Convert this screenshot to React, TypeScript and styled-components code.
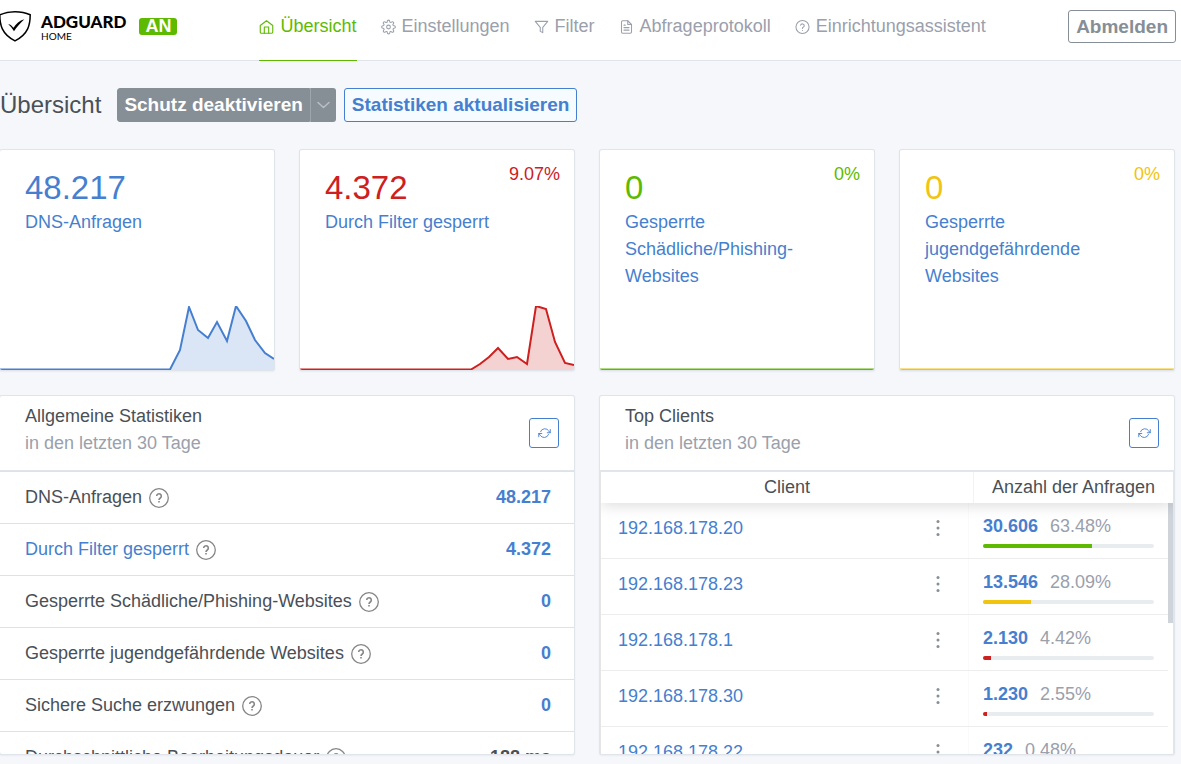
import React from "react";
import styled, { createGlobalStyle } from "styled-components";

const colors = {
  blue: "#467fcf",
  red: "#cd201f",
  green: "#5eba00",
  yellow: "#f1c40f",
  text: "#495057",
  muted: "#9aa0ac",
  gray: "#868e96",
  border: "#e0e5ec",
};

const GlobalStyle = createGlobalStyle`
  *, *::before, *::after { box-sizing: border-box; }
  body {
    margin: 0;
    background: #f5f7fb;
    color: ${colors.text};
    font-family: "Liberation Sans", Arial, sans-serif;
    font-size: 18px;
    line-height: 27px;
  }
  a { color: ${colors.blue}; text-decoration: none; }
  button { font-family: inherit; cursor: pointer; }
`;

const Header = styled.header`
  display: flex;
  align-items: flex-start;
  height: 61px;
  padding-right: 5px;
  background: #fff;
  border-bottom: 1px solid rgba(0, 40, 100, 0.12);
`;

const Brand = styled.a`
  display: flex;
  align-items: center;
  height: 52px;
  color: #000;
`;

const BrandText = styled.span`
  display: flex;
  flex-direction: column;
  margin: 4px 0 0 10px;
  font-family: Lato, sans-serif;
`;

const BrandName = styled.span`
  font-size: 17px;
  font-weight: 900;
  line-height: 16px;
`;

const BrandSub = styled.span`
  font-size: 10px;
  line-height: 12px;
`;

const Badge = styled.span`
  margin: 18px 0 0 13px;
  padding: 0 6px;
  border-radius: 3px;
  background: ${colors.green};
  color: #fff;
  font-weight: 700;
  line-height: 17px;
`;

const Nav = styled.nav`
  display: flex;
  gap: 24px;
  margin-left: 82px;
`;

const NavLink = styled.a<{ $active?: boolean }>`
  display: flex;
  gap: 6px;
  height: 61px;
  padding-top: 13px;
  border-bottom: 1px solid ${(p) => (p.$active ? colors.green : "transparent")};
  color: ${(p) => (p.$active ? colors.green : colors.muted)};
  white-space: nowrap;

  svg { margin-top: 6px; }
`;

const Button = styled.button<{ $tone: "outlineGray" | "outlineBlue" | "solid" }>`
  height: 34px;
  padding: 0 7px;
  border: 1px solid
    ${(p) => (p.$tone === "outlineBlue" ? colors.blue : colors.gray)};
  border-radius: 3px;
  background: ${(p) =>
    p.$tone === "solid" ? colors.gray : p.$tone === "outlineBlue" ? "#f5fbff" : "#fff"};
  color: ${(p) =>
    p.$tone === "solid" ? "#fff" : p.$tone === "outlineBlue" ? colors.blue : colors.gray};
  font-size: 19px;
  font-weight: 700;
  line-height: 30px;
  white-space: nowrap;
`;

const LogoutButton = styled(Button)`
  margin: 10px 0 0 auto;
  height: 33px;
`;

const SplitButton = styled.div`
  display: flex;
  margin: 0 8px 0 16px;
`;

const SplitMain = styled(Button)`
  padding: 0 6px;
  border-radius: 3px 0 0 3px;
`;

const SplitToggle = styled(Button)`
  display: flex;
  align-items: center;
  padding: 0 5px;
  border-width: 0 0 0 1px;
  border-color: #a0a6ad;
  border-radius: 0 3px 3px 0;
  color: #b9bec4;
`;

const Main = styled.main`
  margin-left: -1px;
  padding-right: 6px;
`;

const TitleRow = styled.div`
  display: flex;
  align-items: center;
  padding: 27px 0 27px 1px;
`;

const Title = styled.h1`
  margin: 0;
  font-size: 24px;
  font-weight: 400;
  line-height: 34px;
`;

const StatGrid = styled.section`
  display: grid;
  grid-template-columns: repeat(4, minmax(0, 1fr));
  gap: 24px;
`;

const PanelGrid = styled.section`
  display: grid;
  grid-template-columns: repeat(2, minmax(0, 1fr));
  gap: 24px;
  margin: 24px 0 9px;
`;

const Card = styled.article`
  display: flex;
  flex-direction: column;
  overflow: hidden;
  background: #fff;
  border: 1px solid rgba(0, 40, 100, 0.12);
  border-radius: 3px;
  box-shadow: 0 1px 2px rgba(0, 0, 0, 0.05);
`;

const StatCard = styled(Card)`
  min-height: 222px;
`;

const StatTop = styled.div`
  display: flex;
  justify-content: space-between;
  margin-bottom: 1px;
  padding: 11px 14px 0 25px;
`;

const StatValue = styled.div<{ $color: string }>`
  padding-top: 7px;
  color: ${(p) => p.$color};
  font-size: 33px;
  line-height: 40px;
`;

const StatPercent = styled.div<{ $color: string }>`
  color: ${(p) => p.$color};
`;

const StatLink = styled.a`
  width: 216px;
  padding-left: 25px;
`;

const Chart = styled.svg`
  display: block;
  width: 100%;
  height: 64px;
  margin-top: auto;
`;

const Panel = styled(Card)`
  height: 360px;
`;

const PanelHeader = styled.header`
  display: flex;
  flex: none;
  align-items: center;
  justify-content: space-between;
  height: 75px;
  padding: 0 15px 0 25px;
  border-bottom: 1px solid ${colors.border};
`;

const PanelTitle = styled.h2`
  margin: 0;
  font-size: 18px;
  font-weight: 400;
  line-height: 27px;
`;

const PanelSubtitle = styled.div`
  margin-bottom: 7px;
  color: ${colors.muted};
`;

const IconButton = styled.button`
  display: grid;
  place-items: center;
  width: 30px;
  height: 30px;
  padding: 0;
  border: 1px solid ${colors.blue};
  border-radius: 3px;
  background: #fff;
  color: ${colors.blue};
`;

const StatsTable = styled.table`
  width: 100%;
  border-collapse: separate;
  border-spacing: 0;
`;

const StatsCell = styled.td`
  height: 52px;
  padding: 0 23px 0 25px;
  border-top: 1px solid #dee2e6;

  &:last-child {
    text-align: right;
    font-weight: 700;
  }
`;

const StatsLabel = styled.div`
  display: flex;
  align-items: center;
  gap: 7px;
`;

const ClientsArea = styled.div`
  position: relative;
  flex: 1;
  min-height: 0;
  overflow: hidden;
  border: 1px solid rgba(0, 0, 0, 0.1);
  border-bottom: 0;
`;

const ClientsTable = styled.table`
  display: flex;
  flex-direction: column;
  height: 100%;
`;

const ClientsHead = styled.thead`
  display: block;
  z-index: 1;
  background: #fff;
  box-shadow: 0 2px 15px rgba(0, 0, 0, 0.15);
`;

const ClientsBody = styled.tbody`
  display: block;
  flex: 1;
  min-height: 0;
  padding-right: 5px;
  overflow-y: auto;
  scrollbar-width: none;
`;

const HeadRow = styled.tr`
  display: grid;
  grid-template-columns: minmax(0, 1fr) 200px;
  height: 31px;
`;

const HeadCell = styled.th`
  padding: 2px 0;
  font-weight: 400;
  text-align: center;

  & + & { border-left: 1px solid rgba(0, 0, 0, 0.05); }
`;

const BodyRow = styled.tr`
  display: grid;
  grid-template-columns: minmax(0, 1fr) 199px;
  height: 56px;
  border-bottom: 1px solid #ededed;
`;

const ClientCell = styled.td`
  display: flex;
  align-items: center;
  justify-content: space-between;
  padding: 0 18px 5px 17px;
  border-right: 1px solid rgba(0, 0, 0, 0.02);
`;

const MenuButton = styled.button`
  display: grid;
  place-items: center;
  width: 24px;
  height: 24px;
  padding: 0;
  border: 0;
  background: none;
  color: ${colors.gray};
`;

const CountCell = styled.td`
  padding: 10px 14px 0;
`;

const CountLine = styled.div`
  display: flex;
  gap: 12px;
  color: ${colors.muted};

  a { font-weight: 700; }
`;

const Track = styled.div`
  height: 4px;
  margin-top: 4px;
  overflow: hidden;
  border-radius: 2px;
  background: #e9ecef;
`;

const Fill = styled.div<{ $color: string }>`
  height: 100%;
  background: ${(p) => p.$color};
`;

const ScrollThumb = styled.div`
  position: absolute;
  top: 31px;
  right: 0;
  width: 5px;
  height: 120px;
  background: #ced4da;
`;

const lineIcon = {
  fill: "none",
  stroke: "currentColor",
  strokeLinecap: "round" as const,
  strokeLinejoin: "round" as const,
  "aria-hidden": true,
};

const HomeIcon = () => (
  <svg width="15" height="16" viewBox="0 0 24 24" {...lineIcon} strokeWidth="1.8">
    <path d="M2 9.500 12 2l10 7.500V20a2 2 0 0 1-2 2H4a2 2 0 0 1-2-2z" />
    <path d="M8.500 22V12h7v10" />
  </svg>
);

const GearIcon = () => (
  <svg width="15" height="16" viewBox="0 0 24 24" {...lineIcon} strokeWidth="1.7">
    <circle cx="12" cy="12" r="3" />
    <path d="M19.400 15a1.650 1.650 0 0 0 .33 1.820l.06.06a2 2 0 1 1-2.830 2.830l-.06-.06a1.650 1.650 0 0 0-2.800 1.170V21a2 2 0 0 1-4 0v-.09a1.650 1.650 0 0 0-2.900-1.170l-.06.06a2 2 0 1 1-2.830-2.830l.06-.06A1.650 1.650 0 0 0 3.090 14H3a2 2 0 0 1 0-4h.09a1.650 1.650 0 0 0 1.170-2.900l-.06-.06a2 2 0 1 1 2.830-2.830l.06.06A1.650 1.650 0 0 0 10 3.090V3a2 2 0 0 1 4 0v.09a1.650 1.650 0 0 0 2.800 1.170l.06-.06a2 2 0 1 1 2.830 2.830l-.06.06A1.650 1.650 0 0 0 20.910 10H21a2 2 0 0 1 0 4h-.09a1.650 1.650 0 0 0-1.510 1z" />
  </svg>
);

const FilterIcon = () => (
  <svg width="15" height="16" viewBox="0 0 24 24" {...lineIcon} strokeWidth="1.700">
    <path d="M22 3H2l8 9.460V19l4 2v-8.540z" />
  </svg>
);

const FileIcon = () => (
  <svg width="15" height="16" viewBox="0 0 24 24" {...lineIcon} strokeWidth="1.700">
    <path d="M14 2H6a2 2 0 0 0-2 2v16a2 2 0 0 0 2 2h12a2 2 0 0 0 2-2V8z" />
    <path d="M14 2v6h6M16 13H8M16 17H8M10 9H8" />
  </svg>
);

const HelpIcon = () => (
  <svg width="15" height="16" viewBox="0 0 24 24" {...lineIcon} strokeWidth="1.700">
    <circle cx="12" cy="12" r="10.500" />
    <path d="M9 9a3 3 0 0 1 5.830 1c0 2-3 2.500-3 4.200M12 17.500h.01" />
  </svg>
);

const RowHelpIcon = () => (
  <svg width="20" height="20" viewBox="0 0 20 20" fill="none" stroke="#868686" aria-hidden="true">
    <circle cx="10" cy="10" r="9.300" strokeWidth="1.300" />
    <path d="M7.700 8.100a2.300 2.300 0 1 1 3.600 1.900c-.9.600-1.300.9-1.300 1.900M10 13.100v1.500" strokeWidth="1.600" />
  </svg>
);

const RefreshIcon = () => (
  <svg width="13" height="12" viewBox="0 0 26 24" {...lineIcon} strokeWidth="1.800">
    <path d="M24.500 5v6.500h-6M1.500 19.500V13h6" />
    <path d="M5 9.500a9 8.500 0 0 1 16.500-1.500l3 3.500M1.500 13l3 3.500A9 8.500 0 0 0 21 15" />
  </svg>
);

const DotsIcon = () => (
  <svg width="4" height="18" viewBox="0 0 4 18" fill="currentColor" aria-hidden="true">
    <circle cx="2" cy="2.500" r="1.500" />
    <circle cx="2" cy="9" r="1.500" />
    <circle cx="2" cy="15.500" r="1.500" />
  </svg>
);

const ChevronIcon = () => (
  <svg width="15" height="14" viewBox="0 0 15 14" {...lineIcon} strokeWidth="1.600">
    <path d="m2 4.500 5.500 5 5.500-5" />
  </svg>
);

const ShieldLogo = () => (
  <svg width="31" height="32" viewBox="0 0 31 32" fill="none" stroke="#000" aria-hidden="true">
    <path d="M15 1.800C10 1.800 4.500 2.700-.2 4.800c0 9.500 1.700 19.200 15.200 26C28.500 24 30.200 14.300 30.200 4.800 25.500 2.700 20 1.800 15 1.800z" strokeWidth="1.500" />
    <path d="M8.300 14.200c1.500-.4 3.400 1.200 5.200 3.500C16 13.900 19.500 10.600 24.300 9.300 20.300 13 16.500 17.600 14 21.300c-1.800-3.100-3.600-5.200-5.700-7.100z" fill="#000" stroke="none" />
  </svg>
);

type Point = [number, number];

const flat: Point[] = [[0, 63.5], [274, 63.5]];
const queries: Point[] = [
  [0, 63.5], [170, 63.5], [180, 44], [189, 1], [198, 24], [208, 32], [217, 16],
  [227, 35], [236, 0], [246, 15], [255, 34], [265, 47], [274, 53],
];
const blocked: Point[] = [
  [0, 63.5], [171, 63.5], [180, 58], [189, 51], [198, 42], [208, 53], [217, 51],
  [227, 58], [236, 0], [246, 3], [255, 36], [265, 57], [274, 59],
];

const Sparkline = ({ points, color }: { points: Point[]; color: string }) => {
  const line = points.map((p) => p.join(",")).join(" ");
  return (
    <Chart viewBox="0 0 274 64" preserveAspectRatio="none" aria-hidden="true">
      <polygon points={`0,64 ${line} 274,64`} fill={color} fillOpacity="0.2" />
      <polyline points={line} fill="none" stroke={color} strokeWidth="2" />
    </Chart>
  );
};

const navItems = [
  { label: "Übersicht", icon: <HomeIcon />, active: true },
  { label: "Einstellungen", icon: <GearIcon /> },
  { label: "Filter", icon: <FilterIcon /> },
  { label: "Abfrageprotokoll", icon: <FileIcon /> },
  { label: "Einrichtungsassistent", icon: <HelpIcon /> },
];

const cards = [
  { value: "48.217", label: "DNS-Anfragen", color: colors.blue, points: queries },
  { value: "4.372", label: "Durch Filter gesperrt", percent: "9.07%", color: colors.red, points: blocked },
  { value: "0", label: "Gesperrte Schädliche/Phishing-Websites", percent: "0%", color: colors.green, points: flat },
  { value: "0", label: "Gesperrte jugendgefährdende Websites", percent: "0%", color: colors.yellow, points: flat },
];

const stats = [
  { label: "DNS-Anfragen", value: "48.217" },
  { label: "Durch Filter gesperrt", value: "4.372", link: true },
  { label: "Gesperrte Schädliche/Phishing-Websites", value: "0" },
  { label: "Gesperrte jugendgefährdende Websites", value: "0" },
  { label: "Sichere Suche erzwungen", value: "0" },
  { label: "Durchschnittliche Bearbeitungsdauer", value: "188 ms", plain: true },
];

const clients = [
  { ip: "192.168.178.20", count: "30.606", percent: 63.48, color: colors.green },
  { ip: "192.168.178.23", count: "13.546", percent: 28.09, color: colors.yellow },
  { ip: "192.168.178.1", count: "2.130", percent: 4.42, color: colors.red },
  { ip: "192.168.178.30", count: "1.230", percent: 2.55, color: colors.red },
  { ip: "192.168.178.22", count: "232", percent: 0.48, color: colors.red },
];

const PanelHead = ({ title }: { title: string }) => (
  <PanelHeader>
    <div>
      <PanelTitle>{title}</PanelTitle>
      <PanelSubtitle>in den letzten 30 Tage</PanelSubtitle>
    </div>
    <IconButton type="button" aria-label={`${title} aktualisieren`}>
      <RefreshIcon />
    </IconButton>
  </PanelHeader>
);

export default function App() {
  return (
    <>
      <GlobalStyle />
      <Header>
        <Brand href="#">
          <ShieldLogo />
          <BrandText>
            <BrandName>ADGUARD</BrandName>
            <BrandSub>HOME</BrandSub>
          </BrandText>
        </Brand>
        <Badge>AN</Badge>
        <Nav>
          {navItems.map((item) => (
            <NavLink key={item.label} href="#" $active={item.active}>
              {item.icon}
              {item.label}
            </NavLink>
          ))}
        </Nav>
        <LogoutButton type="button" $tone="outlineGray">Abmelden</LogoutButton>
      </Header>
      <Main>
        <TitleRow>
          <Title>Übersicht</Title>
          <SplitButton>
            <SplitMain type="button" $tone="solid">Schutz deaktivieren</SplitMain>
            <SplitToggle type="button" $tone="solid" aria-label="Weitere Optionen">
              <ChevronIcon />
            </SplitToggle>
          </SplitButton>
          <Button type="button" $tone="outlineBlue">Statistiken aktualisieren</Button>
        </TitleRow>
        <StatGrid>
          {cards.map((card) => (
            <StatCard key={card.label}>
              <StatTop>
                <StatValue $color={card.color}>{card.value}</StatValue>
                {card.percent && <StatPercent $color={card.color}>{card.percent}</StatPercent>}
              </StatTop>
              <StatLink href="#">{card.label}</StatLink>
              <Sparkline points={card.points} color={card.color} />
            </StatCard>
          ))}
        </StatGrid>
        <PanelGrid>
          <Panel>
            <PanelHead title="Allgemeine Statistiken" />
            <StatsTable>
              <tbody>
                {stats.map((row) => (
                  <tr key={row.label}>
                    <StatsCell>
                      <StatsLabel>
                        {row.link ? <a href="#">{row.label}</a> : row.label}
                        <RowHelpIcon />
                      </StatsLabel>
                    </StatsCell>
                    <StatsCell>
                      {row.plain ? row.value : <a href="#">{row.value}</a>}
                    </StatsCell>
                  </tr>
                ))}
              </tbody>
            </StatsTable>
          </Panel>
          <Panel>
            <PanelHead title="Top Clients" />
            <ClientsArea>
              <ClientsTable>
                <ClientsHead>
                  <HeadRow>
                    <HeadCell>Client</HeadCell>
                    <HeadCell>Anzahl der Anfragen</HeadCell>
                  </HeadRow>
                </ClientsHead>
                <ClientsBody>
                  {clients.map((client) => (
                    <BodyRow key={client.ip}>
                      <ClientCell>
                        <a href="#">{client.ip}</a>
                        <MenuButton type="button" aria-label={`Menü ${client.ip}`}>
                          <DotsIcon />
                        </MenuButton>
                      </ClientCell>
                      <CountCell>
                        <CountLine>
                          <a href="#">{client.count}</a>
                          <span>{client.percent}%</span>
                        </CountLine>
                        <Track>
                          <Fill $color={client.color} style={{ width: `${client.percent}%` }} />
                        </Track>
                      </CountCell>
                    </BodyRow>
                  ))}
                </ClientsBody>
              </ClientsTable>
              <ScrollThumb />
            </ClientsArea>
          </Panel>
        </PanelGrid>
      </Main>
    </>
  );
}
